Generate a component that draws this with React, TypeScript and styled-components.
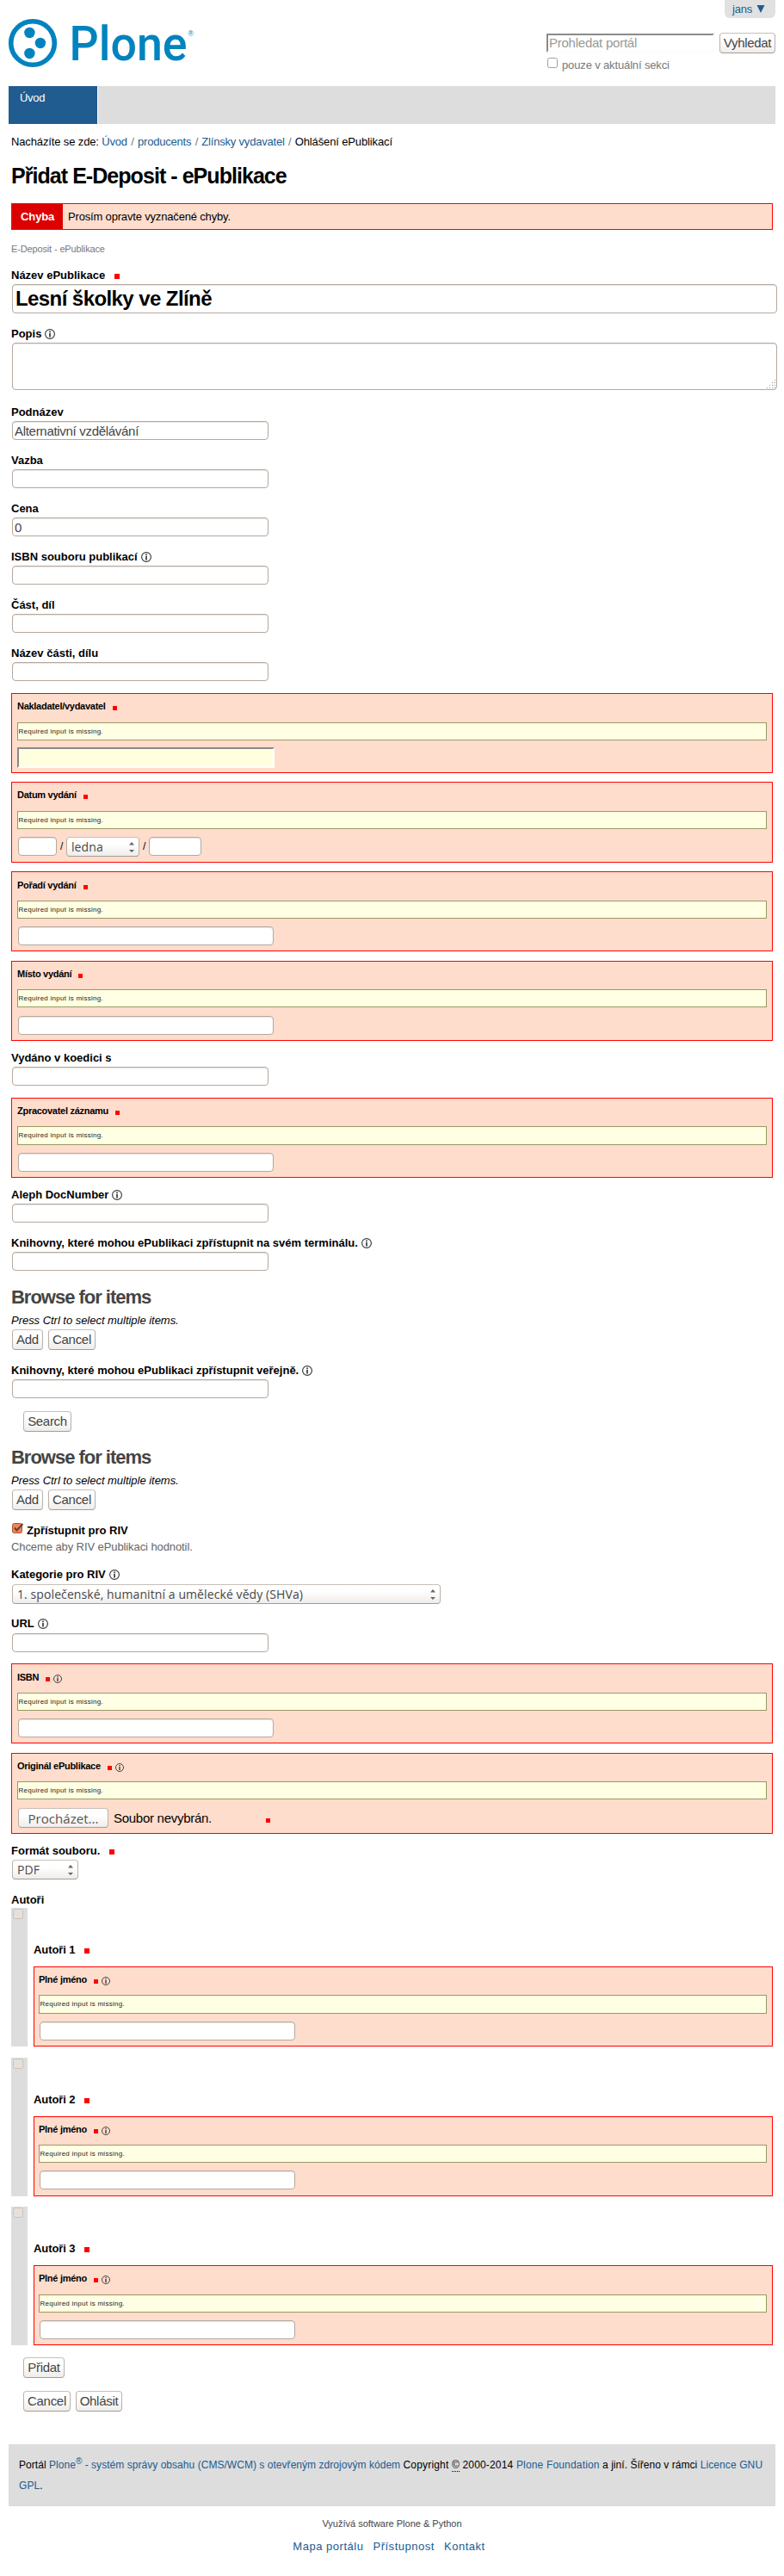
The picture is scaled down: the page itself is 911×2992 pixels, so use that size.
import React from 'react';
import styled, { createGlobalStyle, css } from 'styled-components';

const GlobalStyle = createGlobalStyle`
  * { box-sizing: border-box; }
  body {
    margin: 0;
    background: #fff;
    color: #000;
    font: 13px/16px "Liberation Sans", Arial, sans-serif;
  }
`;

const Page = styled.div`
  width: 911px;
  height: 2992px;
  padding: 0 10px;
  overflow: hidden;
`;

/* ---------- header ---------- */

const Header = styled.header`
  height: 100px;
  display: flex;
  justify-content: space-between;
`;

const HeaderTools = styled.div`
  width: 266px;
  display: flex;
  flex-direction: column;
`;

const PersonalTools = styled.a`
  align-self: flex-end;
  display: flex;
  align-items: center;
  gap: 5px;
  width: 59px;
  height: 21px;
  padding-left: 9px;
  background: #e1e1e1;
  border-radius: 0 0 6px 6px;
  color: #205c90;
  letter-spacing: -0.2px;
`;

const SearchRow = styled.form`
  display: flex;
  margin-top: 17px;
  gap: 6px;
  align-items: flex-start;
`;

const SearchInput = styled.input`
  width: 195px;
  height: 22px;
  margin-top: 1px;
  padding: 0 0 2px 1px;
  border: 2px solid;
  border-color: #8a8a8a #fcfcfc #fcfcfc #8a8a8a;
  background: #fff;
  font: 15px/18px "Liberation Sans", Arial, sans-serif;
  letter-spacing: -0.24px;
  &::placeholder { color: #999; opacity: 1; }
`;

const SectionOption = styled.label`
  display: flex;
  gap: 5px;
  margin-top: 5px;
  padding-left: 1px;
  color: #76797c;
  letter-spacing: -0.14px;
`;

const SectionText = styled.span`
  padding-top: 1px;
`;

const Nav = styled.nav`
  display: flex;
  height: 44px;
  background: #ddd;
`;

const NavTab = styled.a`
  width: 104px;
  padding: 6px 0 0 13px;
  border-right: 1px solid #fff;
  background: #205c90;
  color: #fff;
  letter-spacing: -0.3px;
`;

/* ---------- typography ---------- */

const Content = styled.main`
  padding: 0 3px;
`;

const Link = styled.a`
  color: #205c90;
`;

const Breadcrumbs = styled.div`
  display: flex;
  margin-top: 13px;
  height: 16px;
  white-space: pre;
  letter-spacing: -0.13px;
`;

const Crumb = styled(Link)`
  letter-spacing: -0.2px;
`;

const Separator = styled.span`
  color: #76797c;
  padding: 0 4.2px 0 4.4px;
`;

const Title = styled.h1`
  margin: 17px 0 0;
  font: bold 25px/28px "Liberation Sans", Arial, sans-serif;
  letter-spacing: -0.95px;
`;

const Alert = styled.div`
  display: flex;
  height: 31px;
  margin-top: 18px;
  border: 1px solid red;
  background: #fdc;
  line-height: 29px;
  letter-spacing: -0.17px;
`;

const AlertTag = styled.b`
  width: 59px;
  margin: 0 6px 0 0;
  padding-left: 10px;
  background: #d00;
  color: #fff;
  letter-spacing: -0.1px;
`;

const Description = styled.p`
  margin: 15px 0 0;
  font-size: 11px;
  line-height: 14px;
  color: #76797c;
  letter-spacing: -0.14px;
`;

const Heading = styled.h2<{ $gap: number }>`
  margin: ${p => p.$gap}px 0 0;
  color: #444;
  font: bold 22px/25px "Liberation Sans", Arial, sans-serif;
  letter-spacing: -1.02px;
`;

const Hint = styled.em`
  display: block;
  margin-top: 7px;
  letter-spacing: -0.03px;
`;

/* ---------- form controls ---------- */

const box = css`
  border: 1px solid #b4a9a0;
  border-radius: 4px;
`;

const TextInput = styled.input<{ $w?: number }>`
  ${box}
  display: block;
  width: ${p => p.$w ?? 298}px;
  height: 22px;
  margin: 0 0 0 1px;
  padding: 0 2px;
  background: #fff;
  box-shadow: inset 0 1px 1px #e8e5e2;
  color: #444;
  font: 15px/18px "Liberation Sans", Arial, sans-serif;
  letter-spacing: -0.3px;
`;

const TitleInput = styled(TextInput)`
  width: 889px;
  height: 34px;
  padding: 0 3px;
  color: #000;
  font: bold 24px/30px "Liberation Sans", Arial, sans-serif;
  letter-spacing: -0.58px;
`;

const PlainInput = styled.input`
  display: block;
  width: 299px;
  height: 24px;
  padding: 0 2px;
  border: 2px solid;
  border-color: #8a8a8a #fff #fff #8a8a8a;
  background: #ffffe0;
`;

const AreaWrap = styled.div`
  position: relative;
  width: 889px;
  height: 55px;
  margin: 0 0 0 1px;
`;

const TextArea = styled.textarea`
  ${box}
  display: block;
  width: 100%;
  height: 100%;
  background: #fff;
  box-shadow: inset 0 1px 1px #e8e5e2;
  resize: none;
`;

const Grip = styled.svg`
  position: absolute;
  right: 2px;
  bottom: 2px;
`;

const Button = styled.button<{ $w: number }>`
  ${box}
  width: ${p => p.$w}px;
  height: 24px;
  padding: 0 0 1px;
  border-color: #c8c0b9 #b9b0a8 #a79c93;
  background: linear-gradient(#fff 35%, #efedeb);
  color: #444;
  font: 15px/20px "Liberation Sans", Arial, sans-serif;
  letter-spacing: -0.3px;
  white-space: nowrap;
`;

const FileButton = styled(Button)`
  height: 23px;
  padding: 0;
  color: #555;
  font: 15px/20px "Open Sans", "Noto Sans", sans-serif;
  letter-spacing: 0.05px;
`;

const SelectBox = styled.div<{ $w: number; $large?: boolean }>`
  ${box}
  display: flex;
  justify-content: space-between;
  align-items: center;
  width: ${p => p.$w}px;
  height: 23px;
  margin-left: 1px;
  padding: 0 5px;
  border-color: #c8c0b9 #b9b0a8 #a79c93;
  background: linear-gradient(#fff 35%, #efedeb);
  color: #484848;
  font: 14px/20px "Open Sans", "Noto Sans", sans-serif;
  letter-spacing: 0.09px;
  white-space: nowrap;
`;

const ButtonRow = styled.div<{ $gap: number; $indent?: number }>`
  display: flex;
  gap: 6px;
  margin: ${p => p.$gap}px 0 0 ${p => p.$indent ?? 1}px;
`;

const Check = styled.span<{ $muted?: boolean }>`
  flex: none;
  width: 12px;
  height: 12px;
  border: 1px solid ${p => (p.$muted ? '#cbc2ba' : '#a99d94')};
  border-radius: 2.5px;
  background: ${p => (p.$muted ? '#e5e0dc' : '#fff')};
`;

const Label = styled.label<{ $gap: number; $below: number }>`
  display: flex;
  align-items: flex-start;
  height: 16px;
  margin: ${p => p.$gap}px 0 ${p => p.$below}px;
  font-weight: bold;
  white-space: nowrap;
`;

const Required = styled.i<{ $small?: boolean }>`
  width: ${p => (p.$small ? 5 : 6)}px;
  height: ${p => (p.$small ? 5 : 6)}px;
  margin: ${p => (p.$small ? '7px 0 0 8px' : '6px 0 0 11px')};
  background: red;
`;

const InfoSvg = styled.svg<{ $small?: boolean }>`
  flex: none;
  margin: ${p => (p.$small ? '4px 0 0 4px' : '2px 0 0 4px')};
`;

const HelpText = styled.p`
  margin: 3px 0 0;
  color: #666;
  letter-spacing: -0.09px;
`;

const CheckLabel = styled.label`
  display: flex;
  height: 16px;
  margin: 16px 0 0 1px;
  gap: 3px;
  font-weight: bold;
`;

const TickSvg = styled.svg`
  margin-top: -2px;
`;

/* ---------- invalid fields ---------- */

const ErrorPanel = styled.section<{ $gap: number; $h?: number }>`
  height: ${p => p.$h ?? 93}px;
  margin-top: ${p => p.$gap}px;
  padding: 0 6px;
  border: 1px solid red;
  background: #fdc;
`;

const ErrorTitle = styled.div<{ $top: number; $h: number }>`
  display: flex;
  align-items: flex-start;
  height: ${p => p.$h - 1}px;
  padding-top: ${p => p.$top - 13}px;
  font: bold 11px/14px "Liberation Sans", Arial, sans-serif;
  letter-spacing: -0.28px;
`;

const ErrorMessage = styled.div<{ $h: number }>`
  height: ${p => p.$h}px;
  padding-left: 0.5px;
  border: 1px solid #996;
  background: #ffffe3;
  color: #1c1c1c;
  font-size: 8px;
  line-height: 19px;
  letter-spacing: 0.26px;
`;

const ErrorControl = styled.div<{ $gap: number }>`
  display: flex;
  align-items: flex-start;
  margin-top: ${p => p.$gap}px;
`;

const Slash = styled.span`
  width: 10px;
  padding: 3px 0 0 4px;
  font-size: 12px;
`;

const FileStatus = styled.span`
  width: 177px;
  margin-left: 6px;
  padding-top: 3px;
  font-size: 15px;
  line-height: 17px;
  letter-spacing: -0.28px;
`;

const FileRequired = styled.i`
  width: 5px;
  height: 5px;
  margin-top: 12px;
  background: red;
`;

/* ---------- authors ---------- */

const AuthorRow = styled.div<{ $gap: number }>`
  display: flex;
  gap: 7px;
  height: 161px;
  margin-top: ${p => p.$gap}px;
`;

const Handle = styled.div`
  width: 19px;
  padding: 1px 0 0 2px;
  background: #ddd;
`;

const AuthorBody = styled.div`
  flex: 1;
  padding-top: 41px;
  & > ${Label} { letter-spacing: -0.08px; }
  & > ${ErrorPanel} { padding-left: 5px; }
`;

/* ---------- footer ---------- */

const Footer = styled.footer`
  height: 72px;
  margin-top: 38px;
  padding: 12px;
  background: #ddd;
  font-size: 12px;
  line-height: 24px;
  letter-spacing: 0.04px;
  white-space: nowrap;
`;

const Sup = styled.sup`
  font-size: 10px;
  line-height: 0;
  vertical-align: 5px;
`;

const Abbr = styled.span`
  border-bottom: 1px dotted #000;
`;

const Spaced = styled.span<{ $s: number }>`
  letter-spacing: ${p => p.$s}px;
`;

const Colophon = styled.div`
  margin-top: 13px;
  font-size: 11px;
  line-height: 14px;
  text-align: center;
  color: #444;
`;

const SiteActions = styled.div`
  display: flex;
  justify-content: center;
  gap: 11px;
  margin-top: 12px;
  padding-right: 7px;
  letter-spacing: 0.52px;
`;

/* ---------- drawings ---------- */

const LogoSvg = styled.svg`
  display: block;
  overflow: visible;
`;

const Logo = () => (
  <LogoSvg width="220" height="90" viewBox="0 0 220 90" fill="#0083be">
    <circle cx="28" cy="50" r="25.3" fill="none" stroke="#0083be" strokeWidth="5.6" />
    <circle cx="24.4" cy="38" r="6.2" />
    <circle cx="36.9" cy="50" r="6.2" />
    <circle cx="24.4" cy="62" r="6.2" />
    <text x="70.500" y="69.700" fontFamily="Roboto" fontWeight="500" fontSize="56" textLength="137" lengthAdjust="spacingAndGlyphs">Plone</text>
    <text x="208.500" y="41.500" fontFamily="Liberation Sans" fontSize="8.500">®</text>
  </LogoSvg>
);

const Info = ({ small }: { small?: boolean }) => (
  <InfoSvg $small={small} width={small ? 10 : 12} height={small ? 10 : 12} viewBox="0 0 12 12" fill="none" stroke="#3a3a3a">
    <circle cx="6" cy="6" r="5.4" strokeWidth="1.150" />
    <path d="M6 4.800v4.700M6 2.400v1.500" strokeWidth="1.700" />
  </InfoSvg>
);

const Arrows = () => (
  <svg width="6" height="13" viewBox="0 0 6 13" fill="#666">
    <path d="M0 4.500L3 1L6 4.500zM0 10L3 13L6 10z" />
  </svg>
);

const Ticked = () => (
  <TickSvg width="14" height="14" viewBox="0 0 14 14">
    <rect x="0.500" y="1.500" width="11" height="11" rx="2" fill="#f0825a" stroke="#b0512f" />
    <path d="M3 6.500L5.500 9.500L12.500 2" fill="none" stroke="#5f4136" strokeWidth="2" />
  </TickSvg>
);

const gripDots = [0, 1, 2, 3].flatMap(row =>
  Array.from({ length: row + 1 }, (_, i) => ({ x: 9 - i * 3, y: row * 3 })),
);

const DescriptionArea = () => (
  <AreaWrap>
    <TextArea />
    <Grip width="10" height="10" viewBox="0 0 10 10" fill="#9c9189">
      {gripDots.map(d => <rect key={`${d.x}-${d.y}`} x={d.x} y={d.y} width="1" height="1" />)}
    </Grip>
  </AreaWrap>
);

/* ---------- composed parts ---------- */

type FieldProps = {
  label: string;
  gap?: number;
  below?: number;
  required?: boolean;
  info?: boolean;
  value?: string;
  children?: React.ReactNode;
};

const Field = ({ label, gap = 16, below = 2, required, info, value = '', children }: FieldProps) => (
  <>
    <Label $gap={gap} $below={below}>
      {label}
      {required && <Required />}
      {info && <Info />}
    </Label>
    {children ?? <TextInput defaultValue={value} />}
  </>
);

type InvalidProps = {
  label: string;
  gap: number;
  base?: number;
  msg?: number;
  msgH?: number;
  control?: number;
  h?: number;
  info?: boolean;
  children?: React.ReactNode;
};

const InvalidField = ({ label, gap, base = 19, msg = 34, msgH = 21, control = 64, h, info, children }: InvalidProps) => (
  <ErrorPanel $gap={gap} $h={h}>
    <ErrorTitle $top={base + 1} $h={msg}>
      {label}
      <Required $small />
      {info && <Info small />}
    </ErrorTitle>
    <ErrorMessage $h={msgH}>Required input is missing.</ErrorMessage>
    <ErrorControl $gap={control - msg - msgH}>{children ?? <TextInput $w={297} />}</ErrorControl>
  </ErrorPanel>
);

const Browse = ({ gap }: { gap: number }) => (
  <>
    <Heading $gap={gap}>Browse for items</Heading>
    <Hint>Press Ctrl to select multiple items.</Hint>
    <ButtonRow $gap={2}>
      <Button $w={36}>Add</Button>
      <Button $w={55}>Cancel</Button>
    </ButtonRow>
  </>
);

const authors = [
  { name: 'Autoři 1', gap: 1, msg: 33, msgH: 22, control: 64 },
  { name: 'Autoři 2', gap: 13, msg: 33, msgH: 21, control: 63 },
  { name: 'Autoři 3', gap: 12, msg: 34, msgH: 21, control: 64 },
];

export default function App() {
  return (
    <Page>
      <GlobalStyle />
      <Header>
        <Logo />
        <HeaderTools>
          <PersonalTools>
            jans
            <svg width="10" height="9" viewBox="0 0 10 9" fill="#205c90"><path d="M0.500 0H9.500L5 9z" /></svg>
          </PersonalTools>
          <SearchRow>
            <SearchInput placeholder="Prohledat portál" />
            <Button $w={65} type="button">Vyhledat</Button>
          </SearchRow>
          <SectionOption>
            <Check />
            <SectionText>pouze v aktuální sekci</SectionText>
          </SectionOption>
        </HeaderTools>
      </Header>
      <Nav><NavTab>Úvod</NavTab></Nav>

      <Content>
        <Breadcrumbs>
          {'Nacházíte se zde: '}
          <Crumb>Úvod</Crumb><Separator>/</Separator>
          <Crumb>producents</Crumb><Separator>/</Separator>
          <Crumb>Zlínsky vydavatel</Crumb><Separator>/</Separator>
          Ohlášení ePublikací
        </Breadcrumbs>
        <Title>Přidat E-Deposit - ePublikace</Title>
        <Alert><AlertTag>Chyba</AlertTag>Prosím opravte vyznačené chyby.</Alert>
        <Description>E-Deposit - ePublikace</Description>

        <Field label="Název ePublikace" required>
          <TitleInput defaultValue="Lesní školky ve Zlíně" />
        </Field>
        <Field label="Popis" info><DescriptionArea /></Field>
        <Field label="Podnázev" gap={18} value="Alternativní vzdělávání" />
        <Field label="Vazba" />
        <Field label="Cena" value="0" />
        <Field label="ISBN souboru publikací" info />
        <Field label="Část, díl" />
        <Field label="Název části, dílu" />

        <InvalidField label="Nakladatel/vydavatel" gap={14} control={63}><PlainInput /></InvalidField>
        <InvalidField label="Datum vydání" gap={10} h={94}>
          <TextInput $w={45} />
          <Slash>/</Slash>
          <SelectBox $w={85}>ledna<Arrows /></SelectBox>
          <Slash>/</Slash>
          <TextInput $w={61} />
        </InvalidField>
        <InvalidField label="Pořadí vydání" gap={10} base={20} />
        <InvalidField label="Místo vydání" gap={11} msg={33} />
        <Field label="Vydáno v koedici s" gap={12} />
        <InvalidField label="Zpracovatel záznamu" gap={14} msg={33} msgH={22} />
        <Field label="Aleph DocNumber" gap={12} info />
        <Field label="Knihovny, které mohou ePublikaci zpřístupnit na svém terminálu." info />
        <Browse gap={18} />
        <Field label="Knihovny, které mohou ePublikaci zpřístupnit veřejně." info />
        <ButtonRow $gap={15} $indent={14}><Button $w={56}>Search</Button></ButtonRow>
        <Browse gap={17} />

        <CheckLabel><Ticked />Zpřístupnit pro RIV</CheckLabel>
        <HelpText>Chceme aby RIV ePublikaci hodnotil.</HelpText>
        <Field label="Kategorie pro RIV" below={3} info>
          <SelectBox $w={498}>1. společenské, humanitní a umělecké vědy (SHVa)<Arrows /></SelectBox>
        </Field>
        <Field label="URL" gap={15} below={3} info />
        <InvalidField label="ISBN" gap={13} base={20} info />
        <InvalidField label="Originál ePublikace" gap={11} msg={33} h={94} info>
          <ButtonRow $gap={0}><FileButton $w={105}>Procházet...</FileButton></ButtonRow>
          <FileStatus>Soubor nevybrán.</FileStatus>
          <FileRequired />
        </InvalidField>
        <Field label="Formát souboru." gap={12} required>
          <SelectBox $w={77}>PDF<Arrows /></SelectBox>
        </Field>

        <Label $gap={16} $below={0}>Autoři</Label>
        {authors.map(a => (
          <AuthorRow key={a.name} $gap={a.gap}>
            <Handle><Check as="div" $muted /></Handle>
            <AuthorBody>
              <Label $gap={0} $below={11}>{a.name}<Required /></Label>
              <InvalidField label="Plné jméno" gap={0} msg={a.msg} msgH={a.msgH} control={a.control} info />
            </AuthorBody>
          </AuthorRow>
        ))}
        <ButtonRow $gap={14} $indent={14}><Button $w={48}>Přidat</Button></ButtonRow>
        <ButtonRow $gap={15} $indent={14}>
          <Button $w={55}>Cancel</Button>
          <Button $w={54}>Ohlásit</Button>
        </ButtonRow>
      </Content>

      <Footer>
        Portál <Link>Plone<Sup>®</Sup> - systém správy obsahu (CMS/WCM) s otevřeným zdrojovým kódem</Link>{' '}
        <Spaced $s={0.17}>Copyright <Abbr>©</Abbr> 2000-2014 <Link>Plone Foundation</Link></Spaced>
        {' '}a jiní. Šířeno v rámci <Spaced $s={0.1}><Link>Licence GNU<br />GPL</Link>.</Spaced>
      </Footer>
      <Colophon>Využívá software Plone &amp; Python</Colophon>
      <SiteActions>
        <Link>Mapa portálu</Link>
        <Link>Přístupnost</Link>
        <Link>Kontakt</Link>
      </SiteActions>
    </Page>
  );
}
